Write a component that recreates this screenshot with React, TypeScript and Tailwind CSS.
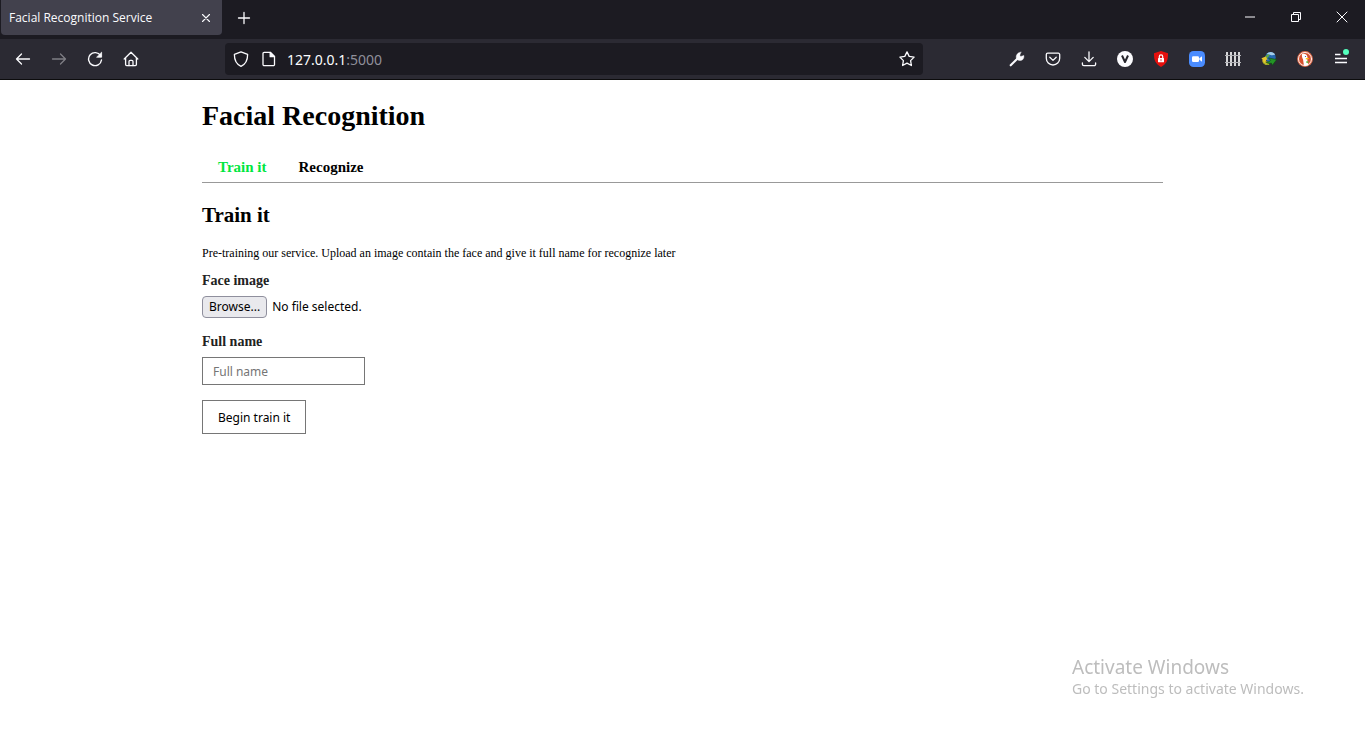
import React from "react";

type IconProps = { children: React.ReactNode; className?: string };

function Icon({ children, className = "size-4" }: IconProps) {
  return (
    <svg
      viewBox="0 0 16 16"
      className={className}
      fill="none"
      stroke="currentColor"
      strokeWidth="1.3"
      strokeLinecap="round"
      strokeLinejoin="round"
      aria-hidden="true"
    >
      {children}
    </svg>
  );
}

function ToolButton({
  label,
  children,
  disabled = false,
}: {
  label: string;
  children: React.ReactNode;
  disabled?: boolean;
}) {
  return (
    <button
      type="button"
      aria-label={label}
      disabled={disabled}
      className="flex h-8 w-9 items-center justify-center text-[#fbfbfe] disabled:opacity-40"
    >
      {children}
    </button>
  );
}

function TabStrip() {
  return (
    <div className="flex h-[39px] items-start bg-[#1c1b22] text-[#fbfbfe]">
      <div className="ml-px flex h-[35px] w-[221px] items-center justify-between rounded-b bg-[#42414d] pr-2 pl-2">
        <span className="font-['Open_Sans',sans-serif] text-xs">Facial Recognition Service</span>
        <button type="button" aria-label="Close tab" className="flex size-4 items-center justify-center">
          <Icon>
            <path d="M4.5 4.5l7 7M11.5 4.5l-7 7" strokeWidth="1.1" />
          </Icon>
        </button>
      </div>
      <button type="button" aria-label="New tab" className="ml-1 flex h-[35px] w-[35px] items-center justify-center">
        <Icon>
          <path d="M8 2.500v11M2.500 8h11" />
        </Icon>
      </button>
      <div className="flex-1" />
      <button type="button" aria-label="Minimize" className="flex h-[33px] w-[46px] items-center justify-center">
        <Icon>
          <path d="M3 8h10" strokeWidth="1" strokeLinecap="butt" />
        </Icon>
      </button>
      <button type="button" aria-label="Restore" className="flex h-[34px] w-[46px] items-center justify-center">
        <Icon>
          <path d="M3.500 5.500h7v7h-7zM5.500 5.500v-2h7v7h-2" strokeWidth="1" strokeLinejoin="miter" strokeLinecap="butt" />
        </Icon>
      </button>
      <button type="button" aria-label="Close" className="flex h-[34px] w-[46px] items-center justify-center">
        <Icon>
          <path d="M3 3l10 10M13 3L3 13" strokeWidth="1" />
        </Icon>
      </button>
    </div>
  );
}

function AddressBar() {
  return (
    <div className="mx-[76px] flex h-8 min-w-0 flex-1 items-center rounded bg-[#1c1b22] px-2 text-[#fbfbfe]">
      <Icon>
        <path d="M8 .8l6.600 2.500c.1 5.200-1.600 9.700-6.600 12-5-2.300-6.700-6.800-6.600-12z" />
      </Icon>
      <Icon className="ml-3 size-4">
        <path d="M3.200 1.400h6.300l4 4v8.100a1.200 1.200 0 0 1-1.200 1.200H3.200A1.200 1.200 0 0 1 2 13.500V2.600a1.200 1.200 0 0 1 1.200-1.200z" />
        <path d="M9.200 1.400v4.300h4.300z" fill="currentColor" />
      </Icon>
      <span className="ml-2.5 flex-1 pt-0.5 text-sm">
        127.0.0.1<span className="text-[#8f8f9a]">:5000</span>
      </span>
      <button type="button" aria-label="Bookmark this page" className="flex size-4 items-center justify-center">
        <Icon>
          <path d="M8 .9l2.200 4.500 4.900.7-3.500 3.500.8 4.900L8 12.200l-4.400 2.300.8-4.900L.9 6.100l4.900-.7z" />
        </Icon>
      </button>
    </div>
  );
}

function Toolbar() {
  return (
    <div className="flex h-[41px] items-center border-b border-[#0c0c0d] bg-[#2b2a33] pr-1.5 pl-[5px]">
      <ToolButton label="Back">
        <Icon>
          <path d="M14.500 8H1.500M6.500 3L1.500 8l5 5" />
        </Icon>
      </ToolButton>
      <ToolButton label="Forward" disabled>
        <Icon>
          <path d="M1.500 8h13M9.500 3l5 5-5 5" />
        </Icon>
      </ToolButton>
      <ToolButton label="Reload">
        <Icon>
          <path d="M13.600 4.700A6.500 6.500 0 1 0 14.500 9" strokeWidth="1.400" />
          <path d="M14.600 1.600v4.600H10z" fill="currentColor" strokeWidth=".8" />
        </Icon>
      </ToolButton>
      <ToolButton label="Home">
        <Icon>
          <path d="M1.200 8L8 1.300 14.800 8M2.600 7v6.600a1.100 1.100 0 0 0 1.100 1.100h8.600a1.100 1.100 0 0 0 1.100-1.100V7" />
          <path d="M6 14.600v-4a1.200 1.200 0 0 1 1.200-1.200h1.600a1.200 1.200 0 0 1 1.200 1.200v4" />
        </Icon>
      </ToolButton>
      <AddressBar />
      <ToolButton label="Developer tools">
        <Icon>
          <path d="M1.700 14.300L9 7" strokeWidth="2.100" />
          <path d="M11.900 1.200L10.800 4.300l1 1.100 3-1c.5 2.300-.5 4.700-2.900 5.100-1.600.3-3-.3-3.900-1.200-.9-1.200-1-2.600-.5-4 .8-2 2.400-3.100 4.400-3.100z" fill="currentColor" strokeWidth=".4" />
        </Icon>
      </ToolButton>
      <ToolButton label="Save to Pocket">
        <Icon>
          <path d="M2.700 2.200h10.600a1.400 1.400 0 0 1 1.400 1.400v3.700a6.700 6.700 0 0 1-13.400 0V3.600a1.400 1.400 0 0 1 1.400-1.400z" />
          <path d="M4.800 6.300L8 9.400l3.200-3.100" />
        </Icon>
      </ToolButton>
      <ToolButton label="Downloads">
        <Icon>
          <path d="M8 .8v9.600M3.800 6.400L8 10.600l4.200-4.200M1.400 12v1.300a1.400 1.400 0 0 0 1.400 1.400h10.400a1.400 1.400 0 0 0 1.400-1.400V12" />
        </Icon>
      </ToolButton>
      <ToolButton label="V extension">
        <Icon>
          <circle cx="8" cy="8" r="8" fill="#fbfbfe" stroke="none" />
          <path d="M5 4.500L8 11l3-6.500" stroke="#25242b" strokeWidth="2" strokeLinecap="butt" />
        </Icon>
      </ToolButton>
      <ToolButton label="Password blocker">
        <Icon>
          <path d="M8 0l7 2.300c.3 6.300-1.500 11-7 13.700C2.500 13.300.7 8.600 1 2.300z" fill="#e5100d" stroke="none" />
          <rect x="5" y="7" width="6" height="4.300" rx=".5" fill="#fff" stroke="none" />
          <path d="M6.300 7V5.500a1.700 1.700 0 0 1 3.400 0V7" stroke="#fff" strokeWidth="1.200" />
          <path d="M8 8.300v1.500" stroke="#dd5555" strokeWidth="1" />
        </Icon>
      </ToolButton>
      <ToolButton label="Zoom scheduler">
        <Icon>
          <rect width="16" height="16" rx="4.500" fill="#4a8cff" stroke="none" />
          <rect x="3" y="5.200" width="7" height="5.800" rx="1.200" fill="#fff" stroke="none" />
          <path d="M10.300 7.300L13 5.300v5.500l-2.700-2z" fill="#fff" stroke="none" />
        </Icon>
      </ToolButton>
      <ToolButton label="Container fence">
        <Icon>
          <path d="M2 1v14M6 1v14M10 1v14M14 1v14" stroke="#d6d6d8" strokeWidth="2" strokeLinecap="butt" />
          <path d="M0 4.500h16M0 11.500h16" stroke="#b0b0b4" strokeWidth="1" strokeLinecap="butt" />
        </Icon>
      </ToolButton>
      <ToolButton label="Download manager">
        <Icon>
          <g stroke="none">
            <circle cx="9.500" cy="6.200" r="5.200" fill="#2668b0" />
            <path d="M5.500 3c2.500-3 7-2.700 8.600.7-2.400.8-5 .6-8.600-.7z" fill="#a3cdea" />
            <path d="M4.600 5.200c1-1.600 2.400-2 4.200-1.400L7 6.300 5 7.500z" fill="#62a543" />
            <path d="M.4 7.200l4.300-1.700 2 3.200-1.700.1c-.3 1.500.8 2.200 2.600 2.200l.4 3C3.700 14.200.7 12.200 1.500 8.500z" fill="#e7c72e" />
            <path d="M2 9.500c.4 2.600 3 3.800 6.400 3.200l-.2 1.100C4.800 14.300 1.800 12.800 2 9.500z" fill="#87a923" />
            <path d="M7.800 7l7.900 1.600-4.400 5.700-.9-2.200c-2.300.7-4.300.4-5.700-1 2 .3 3.700-.2 4.600-1.500z" fill="#249426" stroke="#0e4a12" strokeWidth=".6" />
          </g>
        </Icon>
      </ToolButton>
      <ToolButton label="Privacy search">
        <Icon>
          <circle cx="8" cy="8" r="7.900" fill="#e37151" stroke="none" />
          <circle cx="8" cy="8" r="6.500" fill="#d64f2c" stroke="#fff" strokeWidth=".9" />
          <g stroke="none">
            <path d="M5 3.300C6.700 2.300 10 3 10.500 6l-.2 3 .9 5c-1.500.8-3 .8-4.300.2L6 8.300C5 6.700 4.700 5.200 5 3.300z" fill="#fff" />
            <path d="M8.800 7.300c1.300-.5 2.500-.5 3.500 0-.6.8-1.700 1-3.500 1.200z" fill="#fdbd0a" />
            <path d="M9 10.600l2.300-.7v2.300l-2-.5z" fill="#65bc46" />
            <circle cx="8.500" cy="5.500" r=".6" fill="#2d4f8e" />
          </g>
        </Icon>
      </ToolButton>
      <span className="relative flex">
        <ToolButton label="Open menu">
          <Icon>
            <path d="M2 3.500h5.500M2 7.500h12M2 11.500h12" strokeLinecap="butt" />
          </Icon>
        </ToolButton>
        <span className="absolute top-1.5 right-2.5 size-1.5 rounded-full bg-[#54ffbd]" />
      </span>
    </div>
  );
}

function TrainForm() {
  return (
    <form className="flex flex-col items-start" onSubmit={(event) => event.preventDefault()}>
      <label
        htmlFor="face"
        className="mt-3 font-['Liberation_Serif',serif] text-sm leading-4 font-bold text-[#222222]"
      >
        Face image
      </label>
      <input id="face" type="file" className="sr-only" />
      <label htmlFor="face" className="mt-[7px] flex items-center gap-[5px] text-xs">
        <span className="flex h-[22px] items-center rounded border border-[#8f8f9d] bg-[#e9e9ed] px-1.5">
          Browse...
        </span>
        <span>No file selected.</span>
      </label>
      <label
        htmlFor="full-name"
        className="mt-4 font-['Liberation_Serif',serif] text-sm leading-4 font-bold text-[#222222]"
      >
        Full name
      </label>
      <input
        id="full-name"
        type="text"
        placeholder="Full name"
        className="mt-[7px] h-7 w-[163px] border border-[#767676] px-2.5 text-xs placeholder:text-[#757575]"
      />
      <button type="submit" className="mt-[15px] h-[34px] border border-[#767676] px-[15px] pt-0.5 text-xs">
        Begin train it
      </button>
    </form>
  );
}

export default function App() {
  return (
    <div className="flex min-h-screen flex-col bg-white font-['Noto_Sans',sans-serif] text-black">
      <header>
        <TabStrip />
        <Toolbar />
      </header>
      <main className="mx-auto w-full max-w-[961px] pt-5">
        <h1 className="font-['Liberation_Serif',serif] text-[28px] leading-8 font-bold">Facial Recognition</h1>
        <nav className="mt-5 flex h-[31px] border-b border-[#999999] font-['Liberation_Serif',serif] text-[15px] leading-[30px] font-bold">
          <a href="#train" className="px-4 text-[#00e640]">
            Train it
          </a>
          <a href="#recognize" className="px-4">
            Recognize
          </a>
        </nav>
        <section id="train">
          <h2 className="mt-5 font-['Liberation_Serif',serif] text-[21px] leading-6 font-bold">Train it</h2>
          <p className="mt-[18px] font-['Liberation_Serif',serif] text-xs leading-4">
            Pre-training our service. Upload an image contain the face and give it full name for recognize later
          </p>
          <TrainForm />
        </section>
      </main>
      <aside className="pointer-events-none fixed right-[57px] bottom-[34px] w-[236px] text-[#bdbdbd]">
        <p className="text-[19px] leading-6">Activate Windows</p>
        <p className="text-sm leading-5">Go to Settings to activate Windows.</p>
      </aside>
    </div>
  );
}
